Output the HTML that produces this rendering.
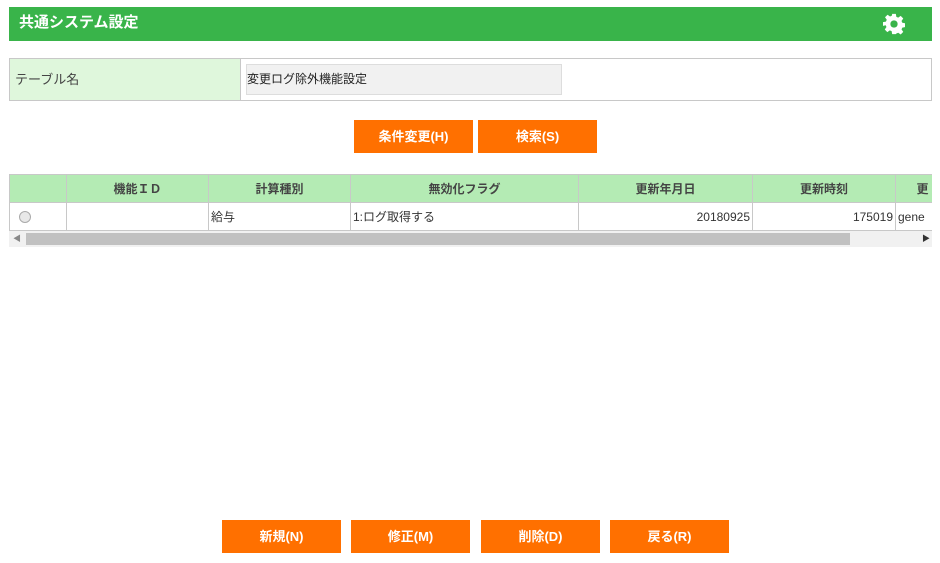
<!DOCTYPE html><html><head><meta charset="utf-8"><style>
body{margin:0;width:940px;height:563px;background:#fff;font-family:"Liberation Sans","Noto Sans CJK JP",sans-serif;position:relative;overflow:hidden}
.a{position:absolute;box-sizing:border-box}
.hd{left:9px;top:7px;width:923px;height:34px;background:#39b44a;color:#fff;font-weight:bold;font-size:15px;line-height:32px;padding-left:10px}
.btn{background:#ff7000;color:#fff;font-size:13px;font-weight:bold;text-align:center;line-height:33px;height:33px;width:119px}
table{border-collapse:collapse;font-size:12px;table-layout:fixed}
td{border:1px solid #c8c8c8;height:26px;padding:0 2px;color:#333;white-space:nowrap;overflow:hidden;box-sizing:border-box}
th{border:1px solid #c8c8c8;background:#b4ebb4;height:26px;font-weight:bold;font-size:12px;color:#444;padding:0;box-sizing:border-box}
</style></head><body>
<div class="a hd">共通システム設定
<svg style="position:absolute;right:27px;top:6px" width="22" height="22" viewBox="0 0 24 24"><path fill="#fff" d="M10 1h4l.6 3.2 2 .9 2.7-1.9 2.8 2.8-1.9 2.7.9 2 3.2.6v4l-3.2.6-.9 2 1.9 2.7-2.8 2.8-2.7-1.9-2 .9L14 23h-4l-.6-3.2-2-.9-2.7 1.9-2.8-2.8 1.9-2.7-.9-2L0 14v-4l3.2-.6.9-2-1.9-2.7 2.8-2.8 2.7 1.9 2-.9z"/><circle cx="12" cy="12" r="4" fill="#39b44a"/></svg></div>
<div class="a" style="left:9px;top:58px;width:923px;height:43px;border:1px solid #c8c8c8"></div>
<div class="a" style="left:10px;top:59px;width:231px;height:41px;background:#dff7dc;border-right:1px solid #c8c8c8;font-size:13px;color:#444;line-height:41px;padding-left:5px">テーブル名</div>
<div class="a" style="left:246px;top:64px;width:316px;height:31px;background:#f1f1f1;border:1px solid #ddd;font-size:12px;line-height:29px;color:#222">変更ログ除外機能設定</div>
<div class="a btn" style="left:354px;top:120px">条件変更(H)</div>
<div class="a btn" style="left:478px;top:120px">検索(S)</div>
<div class="a" style="left:9px;top:174px;width:923px;overflow:hidden">
<table style="width:940px"><colgroup><col style="width:57px"><col style="width:142px"><col style="width:142px"><col style="width:228px"><col style="width:174px"><col style="width:143px"><col style="width:54px"></colgroup>
<tr style="height:28px"><th></th><th>機能ＩＤ</th><th>計算種別</th><th>無効化フラグ</th><th>更新年月日</th><th>更新時刻</th><th>更</th></tr>
<tr style="height:28px"><td><span style="display:inline-block;width:10px;height:10px;border:1px solid #aaa;border-radius:50%;background:#e8e8e8;margin-left:7px;vertical-align:middle"></span></td><td></td><td>給与</td><td>1:ログ取得する</td><td style="text-align:right">20180925</td><td style="text-align:right">175019</td><td>gene</td></tr></table></div>
<div class="a" style="left:9px;top:231px;width:923px;height:16px;background:#f1f1f1"></div>
<div class="a" style="left:26px;top:233px;width:824px;height:12px;background:#c1c1c1"></div>
<div class="a" style="left:13px;top:233px;font-size:8px;color:#888">◀</div>
<div class="a" style="left:922px;top:233px;font-size:8px;color:#333">▶</div>
<div class="a btn" style="left:222px;top:520px">新規(N)</div>
<div class="a btn" style="left:351px;top:520px">修正(M)</div>
<div class="a btn" style="left:481px;top:520px">削除(D)</div>
<div class="a btn" style="left:610px;top:520px">戻る(R)</div>
</body></html>
